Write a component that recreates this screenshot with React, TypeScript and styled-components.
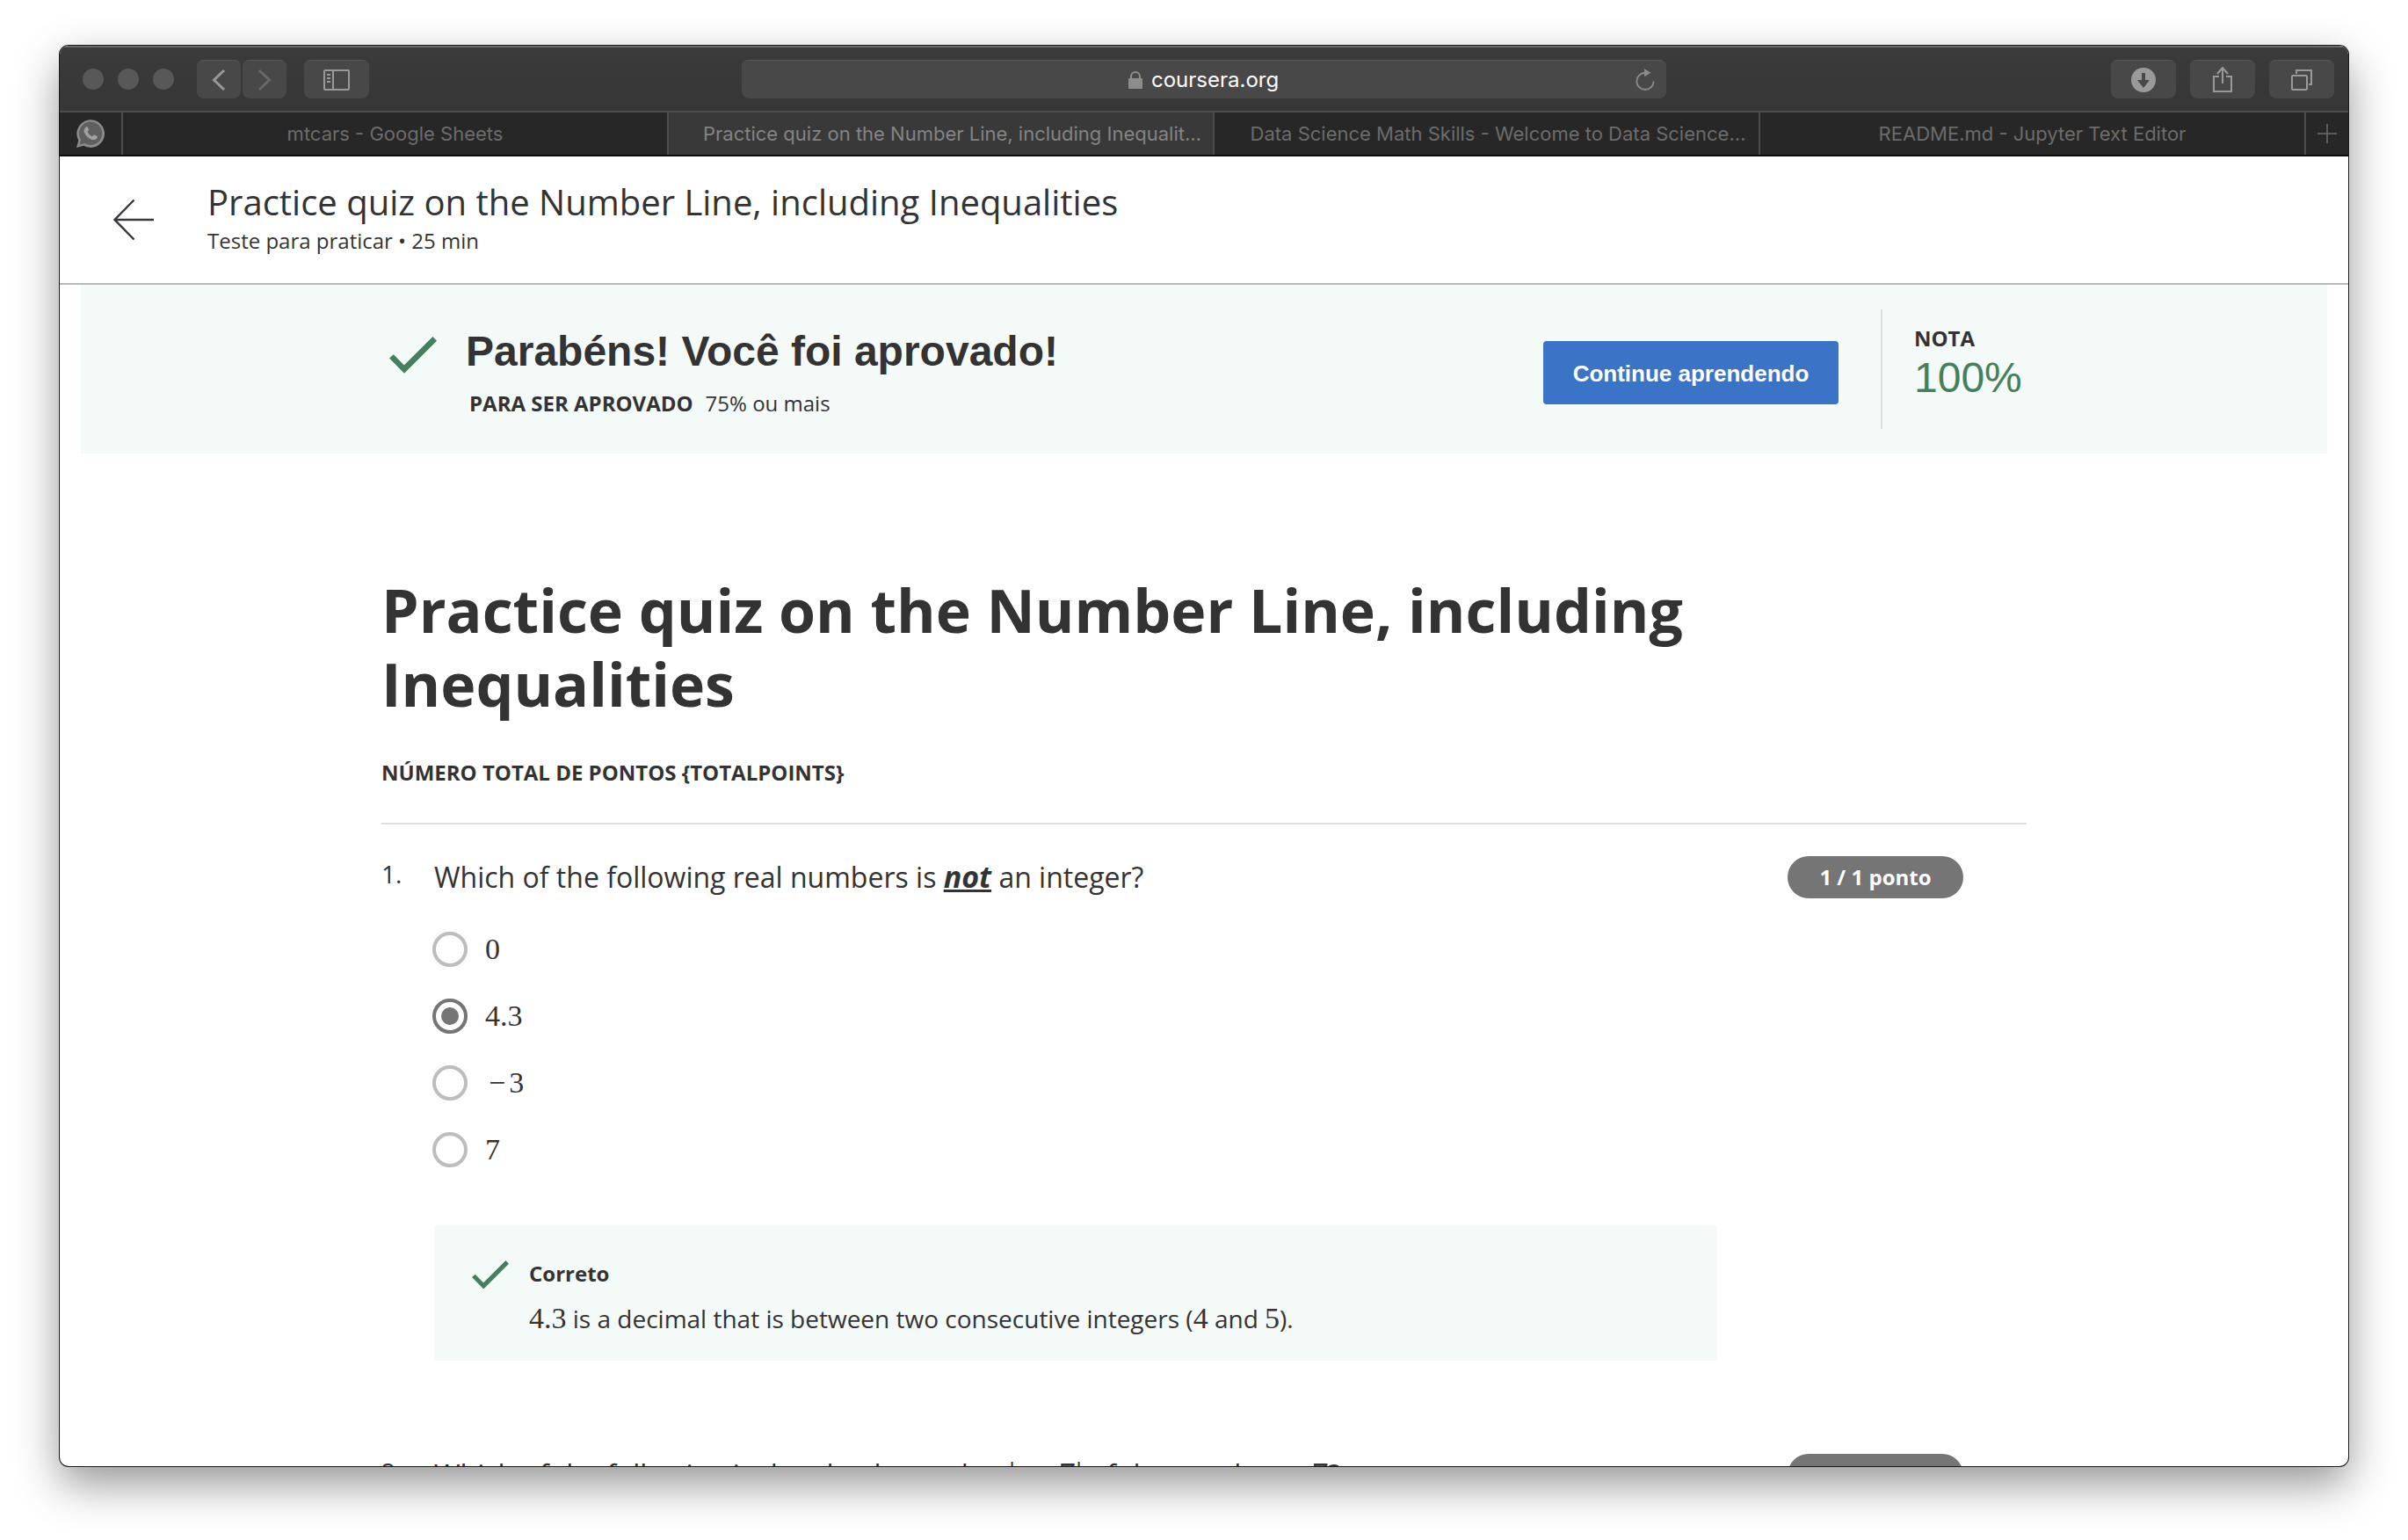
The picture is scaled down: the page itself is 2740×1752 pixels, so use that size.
import React from "react";
import styled, { createGlobalStyle } from "styled-components";

const sans = `"Open Sans", "Noto Sans", sans-serif`;
const helvetica = `"Liberation Sans", Arial, sans-serif`;
const system = `Inter, Roboto, sans-serif`;
const ink = "#333333";
const green = "#43805b";
const mint = "#f3faf8";

const GlobalStyle = createGlobalStyle`
  *, *::before, *::after { box-sizing: border-box; }
  body { margin: 0; background: #ffffff; color: ${ink}; font-family: ${sans}; overflow: hidden; }
  h1, h2, p, fieldset { margin: 0; padding: 0; border: 0; min-width: 0; }
  button, input { font: inherit; }
  svg { display: block; flex: none; }
`;

const Desktop = styled.div`
  display: flex;
  height: 100vh;
  padding: 52px 68px 84px;
`;

const Window = styled.div`
  display: flex;
  flex: 1;
  flex-direction: column;
  min-width: 0;
  overflow: hidden;
  border-radius: 10px;
  background: #ffffff;
  box-shadow: 0 0 0 1px #1a1a1a, 0 20px 50px rgba(0, 0, 0, 0.42);
`;

/* ---------- browser chrome ---------- */

const Toolbar = styled.header`
  display: grid;
  grid-template-columns: 1fr minmax(0, 1052px) 1fr;
  align-items: center;
  flex: none;
  height: 76px;
  padding: 0 16px 0 26px;
  background: linear-gradient(#3b3b3b, #363636);
  border-bottom: 2px solid #4d4d4d;
  border-top: 2px solid #6a6a6a;
`;

const ToolGroup = styled.div<{ $end?: boolean }>`
  display: flex;
  align-items: center;
  gap: ${(p) => (p.$end ? 16 : 20)}px;
  justify-content: ${(p) => (p.$end ? "flex-end" : "flex-start")};
`;

const Lights = styled.div`
  display: flex;
  gap: 16px;
  margin-right: 6px;
`;

const Light = styled.span`
  width: 24px;
  height: 24px;
  border-radius: 50%;
  background: #585858;
`;

const NavPair = styled.div`
  display: flex;
  gap: 2px;
`;

const ToolButton = styled.button<{ $narrow?: boolean; $dim?: boolean }>`
  display: flex;
  align-items: center;
  justify-content: center;
  width: ${(p) => (p.$narrow ? 50 : 74)}px;
  height: 44px;
  padding: 0;
  border: 0;
  border-top: 1px solid #565656;
  border-radius: 8px;
  background: #484848;
  color: ${(p) => (p.$dim ? "#686868" : "#9a9a9a")};
`;

const AddressBar = styled.form`
  display: grid;
  grid-template-columns: 48px 1fr 48px;
  align-items: center;
  height: 44px;
  margin-left: -5px;
  margin-right: 5px;
  border-top: 1px solid #565656;
  border-radius: 8px;
  background: #484848;
  color: #8c8c8c;
`;

const AddressCenter = styled.label`
  display: flex;
  grid-column: 2;
  align-items: center;
  justify-content: center;
  gap: 10px;
`;

const AddressInput = styled.input`
  width: 146px;
  padding: 0;
  border: 0;
  outline: 0;
  background: transparent;
  color: #ffffff;
  font-family: ${system};
  font-size: 24px;
  line-height: 32px;
`;

const ReloadButton = styled.button`
  display: flex;
  justify-content: center;
  padding: 0;
  border: 0;
  background: transparent;
  color: #8c8c8c;
`;

const TabStrip = styled.nav`
  display: grid;
  grid-template-columns: 72px repeat(4, minmax(0, 1fr)) 48px;
  flex: none;
  height: 50px;
  background: #272727;
  border-bottom: 2px solid #0c0c0c;
`;

const TabButton = styled.button<{ $active?: boolean; $clipped?: boolean }>`
  display: flex;
  align-items: center;
  justify-content: center;
  overflow: hidden;
  padding: 0;
  padding-left: ${(p) => (p.$clipped ? 26 : 0)}px;
  border: 0;
  border-right: 2px solid #4c4c4c;
  background: ${(p) => (p.$active ? "#393939" : "transparent")};
  color: ${(p) => (p.$active ? "#848484" : "#6c6c6c")};
  font-family: ${system};
  font-size: 22px;
  white-space: nowrap;

  &:last-child { border-right: 0; }
`;

/* ---------- page ---------- */

const Page = styled.div`
  flex: 1;
  min-height: 0;
  overflow: hidden;
`;

const PageHeader = styled.header`
  display: flex;
  align-items: center;
  gap: 60px;
  padding: 28px 60px;
  border-bottom: 2px solid #b9b9b9;
`;

const BackLink = styled.a`
  color: #3a3740;
`;

const HeaderTitle = styled.p`
  font-size: 40px;
  line-height: 48px;
`;

const HeaderMeta = styled.p`
  font-size: 24px;
  line-height: 40px;
`;

const Banner = styled.section`
  margin: 0 24px;
  padding: 28px 0;
  background: ${mint};
`;

const Column = styled.div`
  max-width: 1872px;
  margin: 0 auto;
`;

const BannerRow = styled(Column)`
  display: grid;
  grid-template-columns: 1fr auto 166px;
  column-gap: 48px;
  min-height: 136px;
`;

const Result = styled.div`
  display: flex;
  gap: 24px;
  padding-top: 20px;
`;

const IconBox = styled.span<{ $large?: boolean }>`
  display: flex;
  flex: none;
  align-items: center;
  justify-content: center;
  width: ${(p) => (p.$large ? 72 : 48)}px;
  height: ${(p) => (p.$large ? 64 : 40)}px;
  color: ${green};
`;

const ResultTitle = styled.h2`
  margin-bottom: 12px;
  font-family: ${helvetica};
  font-size: 48px;
  font-weight: 700;
  line-height: 56px;
`;

const ResultNote = styled.p`
  display: flex;
  gap: 14px;
  padding-left: 4px;
  font-size: 24px;
  line-height: 38px;
`;

const ActionCell = styled.div`
  padding-top: 36px;
`;

const PrimaryButton = styled.button`
  height: 72px;
  min-width: 336px;
  padding: 2px 32px 0;
  border: 0;
  border-radius: 4px;
  background: #3b73c6;
  color: #ffffff;
  font-family: ${helvetica};
  font-size: 26px;
  font-weight: 700;
`;

const Score = styled.div`
  padding: 16px 0 0 36px;
  border-left: 2px solid #dcdfde;
`;

const ScoreLabel = styled.p`
  font-size: 24px;
  font-weight: 700;
  line-height: 34px;
`;

const ScoreValue = styled.p`
  color: ${green};
  font-family: ${helvetica};
  font-size: 48px;
  line-height: 56px;
`;

const Quiz = styled(Column)`
  padding-top: 136px;
`;

const QuizTitle = styled.h1`
  margin-bottom: 40px;
  font-size: 68px;
  font-weight: 700;
  line-height: 84px;
`;

const QuizPoints = styled.p`
  padding-bottom: 38px;
  border-bottom: 2px solid #dedede;
  font-size: 24px;
  font-weight: 700;
  line-height: 38px;
`;

const QuestionList = styled.div`
  padding-top: 36px;
`;

const Question = styled.section`
  display: grid;
  grid-template-columns: 60px minmax(0, 1fr) 200px;
  align-items: start;
  margin-bottom: 106px;
  padding-right: 72px;
`;

const QuestionNumber = styled.span`
  font-size: 28px;
  line-height: 40px;
`;

const QuestionBody = styled.fieldset`
  margin-right: 80px;
`;

const Prompt = styled.legend`
  padding: 0 0 20px;
  font-size: 32px;
  line-height: 48px;
`;

const Stress = styled.em`
  font-size: 34px;
  font-weight: 700;
  line-height: 1;
  text-decoration: underline;
  text-decoration-skip-ink: none;
`;

const Numeral = styled.span<{ $large?: boolean }>`
  font-family: "Liberation Serif", "Times New Roman", serif;
  font-size: ${(p) => (p.$large ? 38 : 34)}px;
  line-height: 1;
`;

const Minus = styled.span<{ $spaced?: boolean }>`
  padding: 0 ${(p) => (p.$spaced ? 14 : 4)}px;
`;

const Option = styled.label`
  display: flex;
  align-items: center;
  gap: 20px;
  width: max-content;
  height: 76px;
  margin-left: -2px;
`;

const Radio = styled.input`
  display: grid;
  place-items: center;
  width: 40px;
  height: 40px;
  margin: 0;
  appearance: none;
  border: 4px solid #bdbdbd;
  border-radius: 50%;

  &:checked { border-color: #757575; }
  &:checked::before {
    content: "";
    width: 20px;
    height: 20px;
    border-radius: 50%;
    background: #757575;
  }
`;

const Feedback = styled.div`
  display: flex;
  gap: 20px;
  margin-top: 48px;
  padding: 36px 40px 24px;
  background: ${mint};
`;

const FeedbackTitle = styled.p`
  margin-bottom: 8px;
  font-size: 24px;
  font-weight: 700;
  line-height: 38px;
`;

const FeedbackText = styled.p`
  font-size: 28px;
  line-height: 48px;
`;

const Points = styled.span`
  height: 48px;
  border-radius: 24px;
  background: #757575;
  color: #ffffff;
  font-size: 24px;
  font-weight: 700;
  line-height: 48px;
  text-align: center;
`;

/* ---------- drawings ---------- */

const Check = ({ width }: { width: number }) => (
  <svg width={width} viewBox="0 0 54 42" fill="currentColor" aria-hidden="true">
    <path d="M0 24.5 4.8 20.3 16.8 32.6 49.4 0 54 4.8 17 41.8z" />
  </svg>
);

const Chevron = ({ flip }: { flip?: boolean }) => (
  <svg width="18" height="26" viewBox="0 0 18 26" fill="none" stroke="currentColor" strokeWidth="3">
    <path d={flip ? "M3 2 14.5 13 3 24" : "M15 2 3.5 13 15 24"} />
  </svg>
);

const SidebarIcon = () => (
  <svg width="30" height="26" viewBox="0 0 30 26" fill="none" stroke="currentColor" strokeWidth="2">
    <rect x="1" y="2" width="28" height="22" rx="1" />
    <path d="M11 2v22M4 7h4M4 11h4M4 15h4" />
  </svg>
);

const LockIcon = () => (
  <svg width="16" height="20" viewBox="0 0 16 20" fill="none">
    <rect y="8" width="16" height="12" rx="1" fill="currentColor" />
    <path d="M3 9V6a5 5 0 0 1 10 0v3" stroke="currentColor" strokeWidth="2" />
  </svg>
);

const ReloadIcon = () => (
  <svg width="22" height="26" viewBox="0 0 24 28" fill="none">
    <path d="M12 5A10.5 10.5 0 1 0 22.5 15.5" stroke="currentColor" strokeWidth="2" />
    <path d="M11 0v10l8-5z" fill="currentColor" />
  </svg>
);

const DownloadIcon = () => (
  <svg width="28" height="28" viewBox="0 0 28 28">
    <circle cx="14" cy="14" r="14" fill="currentColor" />
    <path d="M12 6h4v8h5l-7 9-7-9h5z" fill="#484848" />
  </svg>
);

const ShareIcon = () => (
  <svg width="24" height="32" viewBox="0 0 24 32" fill="none" stroke="currentColor" strokeWidth="2">
    <path d="M8 12H2v17h20V12h-6M12 20V2M6 9l6-7 6 7" />
  </svg>
);

const WindowsIcon = () => (
  <svg width="26" height="26" viewBox="0 0 26 26" fill="none" stroke="currentColor" strokeWidth="2">
    <rect x="2" y="8" width="17" height="16" rx="1" />
    <path d="M7 6V2h17v16h-3" />
  </svg>
);

const PlusIcon = () => (
  <svg width="22" height="22" viewBox="0 0 22 22" stroke="#5c5c5c" strokeWidth="2">
    <path d="M11 0v22M0 11h22" />
  </svg>
);

const WhatsAppIcon = () => (
  <svg width="32" height="32" viewBox="0 0 32 32">
    <path d="M0 32 2.3 23.7A15.800 15.800 0 1 1 8.3 29.8z" fill="#8c8c8c" />
    <path d="M3.6 28.4 5.1 23A13.200 13.200 0 1 1 9.2 27z" fill="#5f5f5f" />
    <path
      d="M10.800 8.500c.6-.6 1.700-.6 2 .2l1.200 2.900c.2.700-1.500 2.200-1.300 2.700 1.100 2.300 2.800 3.900 5.100 4.900.7.300 1.900-2.100 2.600-1.800l2.900 1.400c.9.500.3 2.600-.5 3.300-1.600 1.400-3.600 1.400-5.600.600-4.100-1.500-7.200-4.500-8.500-8.600-.6-2.100.4-4 2.100-5.600z"
      fill="#a0a0a0"
    />
  </svg>
);

const BackArrow = () => (
  <svg width="48" height="48" viewBox="0 0 48 48" fill="none" stroke="currentColor" strokeWidth="2.500">
    <path d="M47 24H3M24.5 1.5 2.500 24 24.500 46.500" />
  </svg>
);

/* ---------- content ---------- */

const tabs = [
  { title: "mtcars - Google Sheets" },
  { title: "Practice quiz on the Number Line, including Inequalit…", active: true, clipped: true },
  { title: "Data Science Math Skills - Welcome to Data Science…", clipped: true },
  { title: "README.md - Jupyter Text Editor" },
];

const answers = ["0", "4.3", "−3", "7"];

const MathValue = ({ value }: { value: string }) =>
  value.startsWith("−") ? (
    <>
      <Minus>−</Minus>
      {value.slice(1)}
    </>
  ) : (
    <>{value}</>
  );

export default function App() {
  const [answer, setAnswer] = React.useState("4.3");

  return (
    <>
      <GlobalStyle />
      <Desktop>
        <Window>
          <Toolbar>
            <ToolGroup>
              <Lights>
                <Light />
                <Light />
                <Light />
              </Lights>
              <NavPair>
                <ToolButton $narrow aria-label="Back"><Chevron /></ToolButton>
                <ToolButton $narrow $dim aria-label="Forward"><Chevron flip /></ToolButton>
              </NavPair>
              <ToolButton aria-label="Sidebar"><SidebarIcon /></ToolButton>
            </ToolGroup>
            <AddressBar onSubmit={(e) => e.preventDefault()}>
              <AddressCenter>
                <LockIcon />
                <AddressInput aria-label="Address" defaultValue="coursera.org" />
              </AddressCenter>
              <ReloadButton type="button" aria-label="Reload"><ReloadIcon /></ReloadButton>
            </AddressBar>
            <ToolGroup $end>
              <ToolButton aria-label="Downloads"><DownloadIcon /></ToolButton>
              <ToolButton aria-label="Share"><ShareIcon /></ToolButton>
              <ToolButton aria-label="Show all tabs"><WindowsIcon /></ToolButton>
            </ToolGroup>
          </Toolbar>
          <TabStrip>
            <TabButton aria-label="WhatsApp"><WhatsAppIcon /></TabButton>
            {tabs.map((tab) => (
              <TabButton key={tab.title} $active={tab.active} $clipped={tab.clipped}>
                {tab.title}
              </TabButton>
            ))}
            <TabButton aria-label="New tab"><PlusIcon /></TabButton>
          </TabStrip>

          <Page>
            <PageHeader>
              <BackLink href="#" aria-label="Voltar"><BackArrow /></BackLink>
              <div>
                <HeaderTitle>Practice quiz on the Number Line, including Inequalities</HeaderTitle>
                <HeaderMeta>Teste para praticar • 25 min</HeaderMeta>
              </div>
            </PageHeader>

            <Banner>
              <BannerRow>
                <Result>
                  <IconBox $large><Check width={54} /></IconBox>
                  <div>
                    <ResultTitle>Parabéns! Você foi aprovado!</ResultTitle>
                    <ResultNote>
                      <strong>PARA SER APROVADO</strong>
                      <span>75% ou mais</span>
                    </ResultNote>
                  </div>
                </Result>
                <ActionCell>
                  <PrimaryButton>Continue aprendendo</PrimaryButton>
                </ActionCell>
                <Score>
                  <ScoreLabel>NOTA</ScoreLabel>
                  <ScoreValue>100%</ScoreValue>
                </Score>
              </BannerRow>
            </Banner>

            <Quiz as="main">
              <QuizTitle>Practice quiz on the Number Line, including Inequalities</QuizTitle>
              <QuizPoints>NÚMERO TOTAL DE PONTOS {"{TOTALPOINTS}"}</QuizPoints>

              <QuestionList>
                <Question>
                  <QuestionNumber>1.</QuestionNumber>
                  <QuestionBody>
                    <Prompt>
                      Which of the following real numbers is <Stress>not</Stress> an integer?
                    </Prompt>
                    {answers.map((value) => (
                      <Option key={value}>
                        <Radio
                          type="radio"
                          name="question-1"
                          checked={answer === value}
                          onChange={() => setAnswer(value)}
                        />
                        <Numeral><MathValue value={value} /></Numeral>
                      </Option>
                    ))}
                    <Feedback>
                      <IconBox><Check width={42} /></IconBox>
                      <div>
                        <FeedbackTitle>Correto</FeedbackTitle>
                        <FeedbackText>
                          <Numeral>4.3</Numeral> is a decimal that is between two consecutive
                          integers (<Numeral>4</Numeral> and <Numeral>5</Numeral>).
                        </FeedbackText>
                      </div>
                    </Feedback>
                  </QuestionBody>
                  <Points>1 / 1 ponto</Points>
                </Question>

                <Question>
                  <QuestionNumber>2.</QuestionNumber>
                  <QuestionBody>
                    <Prompt>
                      Which of the following is the absolute value{" "}
                      <Numeral $large>|<Minus $spaced>−</Minus>7|</Numeral> of the number{" "}
                      <Numeral $large><MathValue value="−7" /></Numeral>?
                    </Prompt>
                  </QuestionBody>
                  <Points>1 / 1 ponto</Points>
                </Question>
              </QuestionList>
            </Quiz>
          </Page>
        </Window>
      </Desktop>
    </>
  );
}
